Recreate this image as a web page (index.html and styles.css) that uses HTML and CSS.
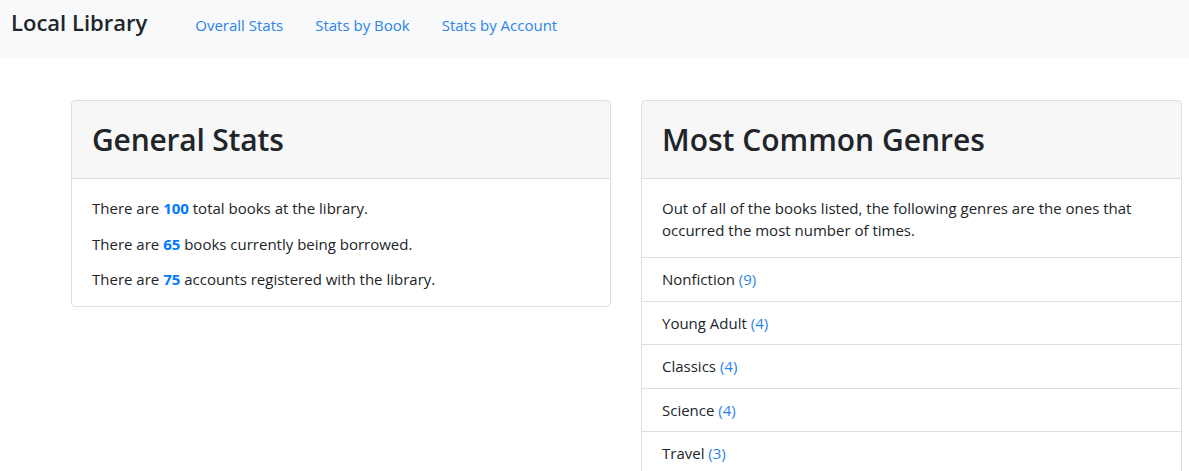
FILE: index.html
```html
<!DOCTYPE html>
<html lang="en">
<head>
<meta charset="utf-8">
<title>Local Library</title>
<link rel="stylesheet" href="styles.css">
</head>
<body>
<nav class="navbar">
  <a class="brand" href="#">Local Library</a>
  <a class="nav-link" href="#">Overall Stats</a>
  <a class="nav-link" href="#">Stats by Book</a>
  <a class="nav-link" href="#">Stats by Account</a>
</nav>
<main class="content">
  <section class="card card-left">
    <div class="card-header"><h1>General Stats</h1></div>
    <div class="card-body">
      <p>There are <strong>100</strong> total books at the library.</p>
      <p>There are <strong>65</strong> books currently being borrowed.</p>
      <p>There are <strong>75</strong> accounts registered with the library.</p>
    </div>
  </section>
  <section class="card card-right">
    <div class="card-header"><h1>Most Common Genres</h1></div>
    <div class="card-body">
      <p>Out of all of the books listed, the following genres are the ones that occurred the most number of times.</p>
    </div>
    <ul class="list">
      <li>Nonfiction <span class="count">(9)</span></li>
      <li>Young Adult <span class="count">(4)</span></li>
      <li>Classics <span class="count">(4)</span></li>
      <li>Science <span class="count">(4)</span></li>
      <li>Travel <span class="count">(3)</span></li>
    </ul>
  </section>
</main>
</body>
</html>
```

FILE: styles.css
```css
* { box-sizing: border-box; }
body {
  margin: 0;
  font-family: "Open Sans", "Noto Sans", sans-serif;
  color: #212529;
  background: #fff;
  font-size: 15px;
}
.navbar {
  background: #f8f9fa;
  height: 57px;
  display: flex;
  align-items: center;
  padding: 0 0 8px 11px;
}
.brand {
  font-size: 22px;
  font-weight: 600;
  color: #212529;
  text-decoration: none;
  margin-right: 32px;
  margin-top: -6px;
}
.nav-link {
  color: #2b84ea;
  text-decoration: none;
  padding: 0 16px;
  font-size: 15px;
}
.content {
  display: flex;
  align-items: flex-start;
  gap: 30px;
  padding: 43px 0 0 71px;
}
.card {
  flex: none;
  border: 1px solid rgba(0,0,0,.125);
  border-radius: 4px;
  overflow: hidden;
}
.card-left { width: 540px; }
.card-right { width: 541px; }
.card-header {
  background: rgba(0,0,0,.03);
  height: 78px;
  border-bottom: 1px solid rgba(0,0,0,.1);
  display: flex;
  align-items: center;
  padding: 0 20px;
}
.card-header h1 {
  margin: 0;
  font-size: 30px;
  font-weight: 600;
  letter-spacing: -0.2px;
}
.card-right .card-header h1 { letter-spacing: 0; }
.card-body {
  padding: 18px 20px 16px;
}
.card-body p {
  margin: 0 0 13.5px;
  line-height: 22px;
}
.card-body p:last-child { margin-bottom: 0; }
strong { color: #007bff; font-weight: 700; }
.list {
  list-style: none;
  margin: 0;
  padding: 0;
}
.list li {
  border-top: 1px solid rgba(0,0,0,.125);
  padding: 10.25px 20px;
  line-height: 22px;
}
.count { color: #2b84ea; }
```
